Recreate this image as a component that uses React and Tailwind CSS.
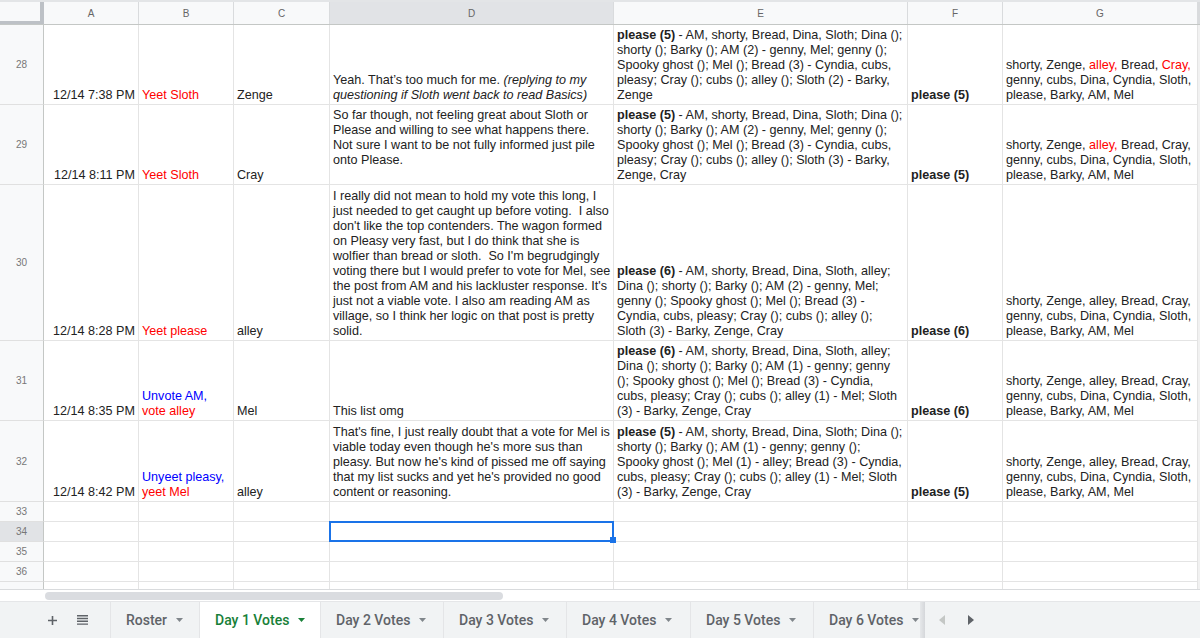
import React from "react";

const colTemplate = "grid-cols-[44px_95px_95px_96px_284px_294px_95px_195px_2px]";

const colHeaders = ["A", "B", "C", "D", "E", "F", "G"];

const Red = ({ children }) => <span className="text-[#ff0000]">{children}</span>;
const Blue = ({ children }) => <span className="text-[#0000ff]">{children}</span>;
const B = ({ children }) => <b className="font-bold">{children}</b>;

const tail = ["shorty, Zenge, alley, Bread, Cray,", "genny, cubs, Dina, Cyndia, Sloth,", "please, Barky, AM, Mel"];

const rows = [
  {
    num: 28,
    h: "h-[80px]",
    time: "12/14 7:38 PM",
    vote: [<Red>Yeet Sloth</Red>],
    who: "Zenge",
    text: [
      <span>Yeah. That’s too much for me. <i>(replying to my</i></span>,
      <i>questioning if Sloth went back to read Basics)</i>,
    ],
    count: [
      <span><B>please (5)</B> - AM, shorty, Bread, Dina, Sloth; Dina ();</span>,
      "shorty (); Barky (); AM (2) - genny, Mel; genny ();",
      "Spooky ghost (); Mel (); Bread (3) - Cyndia, cubs,",
      "pleasy; Cray (); cubs (); alley (); Sloth (2) - Barky,",
      "Zenge",
    ],
    top: "please (5)",
    list: [
      <span>shorty, Zenge, <Red>alley,</Red> Bread, <Red>Cray,</Red></span>,
      tail[1],
      tail[2],
    ],
  },
  {
    num: 29,
    h: "h-[80px]",
    time: "12/14 8:11 PM",
    vote: [<Red>Yeet Sloth</Red>],
    who: "Cray",
    text: [
      "So far though, not feeling great about Sloth or",
      "Please and willing to see what happens there.",
      "Not sure I want to be not fully informed just pile",
      "onto Please.",
      " ",
    ],
    count: [
      <span><B>please (5)</B> - AM, shorty, Bread, Dina, Sloth; Dina ();</span>,
      "shorty (); Barky (); AM (2) - genny, Mel; genny ();",
      "Spooky ghost (); Mel (); Bread (3) - Cyndia, cubs,",
      "pleasy; Cray (); cubs (); alley (); Sloth (3) - Barky,",
      "Zenge, Cray",
    ],
    top: "please (5)",
    list: [
      <span>shorty, Zenge, <Red>alley,</Red> Bread, Cray,</span>,
      tail[1],
      tail[2],
    ],
  },
  {
    num: 30,
    h: "h-[156px]",
    time: "12/14 8:28 PM",
    vote: [<Red>Yeet please</Red>],
    who: "alley",
    text: [
      "I really did not mean to hold my vote this long, I",
      "just needed to get caught up before voting.  I also",
      "don't like the top contenders. The wagon formed",
      "on Pleasy very fast, but I do think that she is",
      "wolfier than bread or sloth.  So I'm begrudgingly",
      "voting there but I would prefer to vote for Mel, see",
      "the post from AM and his lackluster response. It's",
      "just not a viable vote. I also am reading AM as",
      "village, so I think her logic on that post is pretty",
      "solid.",
    ],
    count: [
      <span><B>please (6)</B> - AM, shorty, Bread, Dina, Sloth, alley;</span>,
      "Dina (); shorty (); Barky (); AM (2) - genny, Mel;",
      "genny (); Spooky ghost (); Mel (); Bread (3) -",
      "Cyndia, cubs, pleasy; Cray (); cubs (); alley ();",
      "Sloth (3) - Barky, Zenge, Cray",
    ],
    top: "please (6)",
    list: tail,
  },
  {
    num: 31,
    h: "h-[80px]",
    time: "12/14 8:35 PM",
    vote: [<Blue>Unvote AM,</Blue>, <Red>vote alley</Red>],
    who: "Mel",
    text: ["This list omg"],
    count: [
      <span><B>please (6)</B> - AM, shorty, Bread, Dina, Sloth, alley;</span>,
      "Dina (); shorty (); Barky (); AM (1) - genny; genny",
      "(); Spooky ghost (); Mel (); Bread (3) - Cyndia,",
      "cubs, pleasy; Cray (); cubs (); alley (1) - Mel; Sloth",
      "(3) - Barky, Zenge, Cray",
    ],
    top: "please (6)",
    list: tail,
  },
  {
    num: 32,
    h: "h-[81px]",
    time: "12/14 8:42 PM",
    vote: [<Blue>Unyeet pleasy,</Blue>, <Red>yeet Mel</Red>],
    who: "alley",
    text: [
      "That's fine, I just really doubt that a vote for Mel is",
      "viable today even though he's more sus than",
      "pleasy. But now he's kind of pissed me off saying",
      "that my list sucks and yet he's provided no good",
      "content or reasoning.",
    ],
    count: [
      <span><B>please (5)</B> - AM, shorty, Bread, Dina, Sloth; Dina ();</span>,
      "shorty (); Barky (); AM (1) - genny; genny ();",
      "Spooky ghost (); Mel (1) - alley; Bread (3) - Cyndia,",
      "cubs, pleasy; Cray (); cubs (); alley (1) - Mel; Sloth",
      "(3) - Barky, Zenge, Cray",
    ],
    top: "please (5)",
    list: tail,
  },
];

const tabs = [
  { name: "Roster", w: "w-[89px]" },
  { name: "Day 1 Votes", w: "w-[121px]", active: true },
  { name: "Day 2 Votes", w: "w-[123px]" },
  { name: "Day 3 Votes", w: "w-[123px]" },
  { name: "Day 4 Votes", w: "w-[124px]" },
  { name: "Day 5 Votes", w: "w-[123px]" },
  { name: "Day 6 Votes", w: "w-[107px]" },
];

function RowHead({ num, active, h }) {
  return (
    <div
      className={`${h} flex items-center justify-center border-b border-b-[#e0e0e0] border-r border-r-[#c4c7c5] text-[10px] text-[#777] ${
        active ? "bg-[#e1e3e6]" : "bg-[#f8f9fa]"
      }`}
    >
      {num}
    </div>
  );
}

function Cell({ lines = [], right, bold }) {
  return (
    <div
      className={`flex flex-col justify-end overflow-hidden whitespace-pre border-b border-r border-[#e4e4e4] pb-[1px] pl-[3px] pr-[3px] ${
        right ? "items-end" : ""
      } ${bold ? "font-bold" : ""}`}
    >
      {lines.map((l, i) => (
        <div key={i}>{l}</div>
      ))}
    </div>
  );
}

function Caret({ color = "#80868b" }) {
  return (
    <svg width="7" height="4" viewBox="0 0 7 4" className="shrink-0">
      <path d="M0 0h7L3.5 4z" fill={color} />
    </svg>
  );
}

export default function App() {
  return (
    <div className="flex h-[638px] w-[1200px] flex-col overflow-hidden bg-white font-['Liberation_Sans',Arial,sans-serif] text-[12.6px] leading-[15px] text-[#222]">
      <div className="h-[2px] shrink-0 bg-[#e3e5e7]" />
      <div className={`grid h-[23px] shrink-0 ${colTemplate} border-b border-[#c4c7c5] bg-[#f8f9fa]`}>
        <div className="border-b-[3px] border-r-[4px] border-b-[#bdc1c6] border-r-[#bdc1c6] bg-[#f8f9fa]" />
        {colHeaders.map((c) => (
          <div
            key={c}
            className={`flex items-center justify-center border-r border-[#d9dbdd] text-[10px] text-[#666] ${
              c === "D" ? "bg-[#e1e3e6]" : ""
            }`}
          >
            {c}
          </div>
        ))}
        <div className="bg-[#d9dbdd]" />
      </div>

      <div className="relative h-[564px] shrink-0 overflow-hidden">
        {rows.map((r) => (
          <div key={r.num} className={`grid ${r.h} ${colTemplate}`}>
            <RowHead num={r.num} h={r.h} />
            <Cell lines={[r.time]} right />
            <Cell lines={r.vote} />
            <Cell lines={[r.who]} />
            <Cell lines={r.text} />
            <Cell lines={r.count} />
            <Cell lines={[r.top]} bold />
            <Cell lines={r.list} />
            <div className="bg-[#f1f1f1]" />
          </div>
        ))}
        {[33, 34, 35, 36, 37].map((n) => (
          <div key={n} className={`grid h-[20px] ${colTemplate}`}>
            <RowHead num={n === 37 ? "" : n} h="h-[20px]" active={n === 34} />
            {colHeaders.map((c) => (
              <div
                key={c}
                className={`border-b border-r border-[#e4e4e4] ${
                  n === 34 && c === "D" ? "relative" : ""
                }`}
              >
                {n === 34 && c === "D" && (
                  <>
                    <div className="absolute -left-px -top-px h-[21px] w-[285px] border-2 border-[#1a73e8]" />
                    <div className="absolute -bottom-[2px] -right-[3px] h-[6px] w-[6px] bg-[#1a73e8]" />
                  </>
                )}
              </div>
            ))}
            <div className="bg-[#f1f1f1]" />
          </div>
        ))}
      </div>

      <div className="flex h-[12px] shrink-0 items-center border-t border-[#d9dbdd] bg-white pl-[45px]">
        <div className="h-[8px] w-[458px] rounded-full bg-[#dadce0]" />
      </div>

      <div className="flex min-h-0 flex-1 border-t border-[#e5e6e8] bg-[#f1f3f4] font-['Roboto',sans-serif] text-[14px] font-medium text-[#5f6368]">
        <div className="flex w-[110px] shrink-0 items-center">
          <svg width="9" height="9" viewBox="0 0 9 9" className="ml-[48px]">
            <path d="M3.7 0h1.6v3.7H9v1.6H5.3V9H3.7V5.3H0V3.7h3.7z" fill="#5f6368" />
          </svg>
          <svg width="11" height="10" viewBox="0 0 11 10" className="ml-[20px]">
            <path d="M0 0h11v1.4H0zM0 2.8h11v1.4H0zM0 5.6h11V7H0zM0 8.4h11v1.4H0z" fill="#5f6368" />
          </svg>
        </div>
        {tabs.map((t) => (
          <div
            key={t.name}
            className={`${t.w} flex shrink-0 items-center gap-[9px] overflow-hidden whitespace-nowrap border-l border-[#e4e5e7] pl-[15px] ${
              t.active ? "bg-white text-[#188038]" : ""
            }`}
          >
            <span>{t.name}</span>
            <Caret color={t.active ? "#188038" : "#80868b"} />
          </div>
        ))}
        <div className="w-[5px] shrink-0 bg-gradient-to-r from-[#e6e8ea] to-[#d5d7da]" />
        <div className="flex items-center">
          <svg width="6" height="10" viewBox="0 0 6 10" className="ml-[14px]">
            <path d="M6 0v10L0 5z" fill="#c4c7c5" />
          </svg>
          <svg width="6" height="10" viewBox="0 0 6 10" className="ml-[23px]">
            <path d="M0 0v10l6-5z" fill="#5f6368" />
          </svg>
        </div>
      </div>
    </div>
  );
}
